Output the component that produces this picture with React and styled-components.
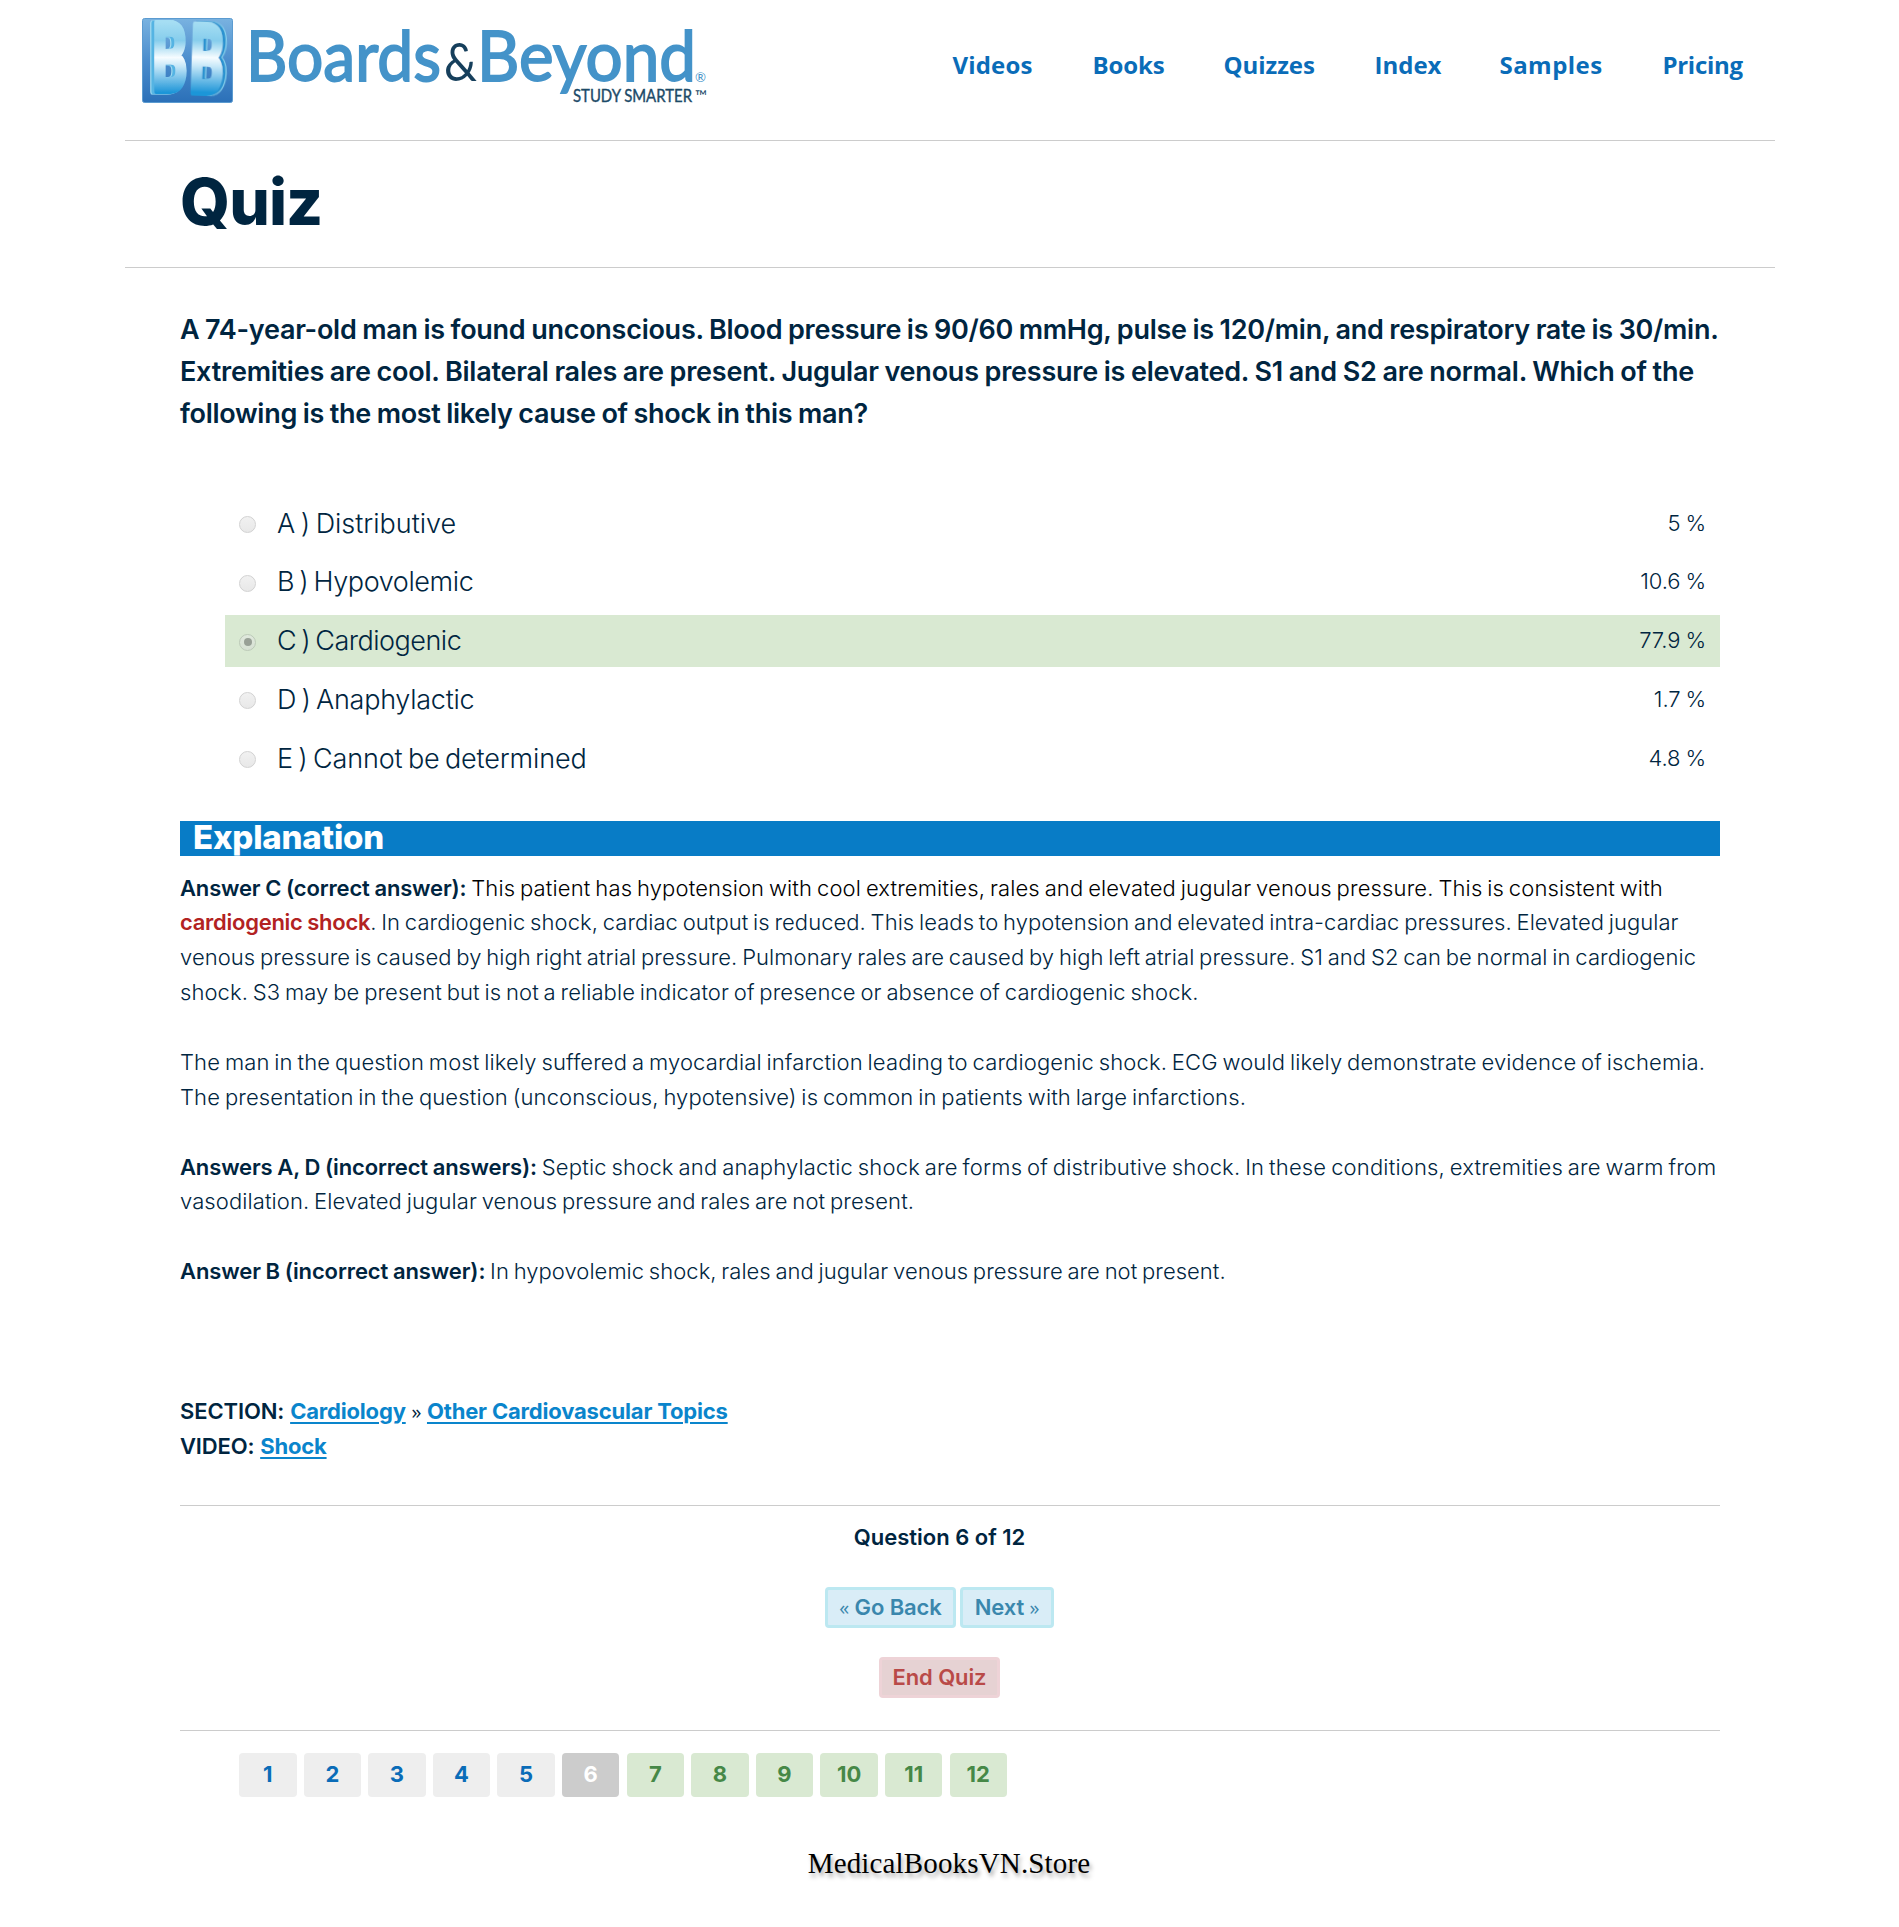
import React from 'react';
import styled, { createGlobalStyle } from 'styled-components';

const Global = createGlobalStyle`
  * { box-sizing: border-box; }
  body { margin: 0; background: #fff; color: #002540; font-family: Inter, "Liberation Sans", sans-serif; }
`;

const Page = styled.div`
  width: 1650px;
  height: 1927px;
  margin-left: 125px;
  overflow: hidden;
`;
const Header = styled.header`
  display: flex;
  justify-content: space-between;
  height: 141px;
  padding: 12px 32px 0 15px;
  border-bottom: 1px solid #ccc;
`;
const Logo = styled.svg`
  display: block;
  width: 572px;
  height: 98px;
`;
const Nav = styled.nav`
  display: flex;
  gap: 60px;
  padding-top: 33px;
`;
const NavLink = styled.a`
  width: ${(p) => p.$w}px;
  white-space: nowrap;
  font: 700 24px/40px "Open Sans", sans-serif;
  letter-spacing: ${(p) => p.$ls}px;
  color: #0a6cb8;
`;
const TitleBar = styled.div`
  height: 127px;
  padding: 20px 55px 0;
  border-bottom: 1px solid #ccc;
`;
const Title = styled.h1`
  margin: 0;
  font-size: 64px;
  font-weight: 800;
  line-height: 82px;
  letter-spacing: -0.9px;
`;
const Content = styled.main`
  padding: 41px 55px 0;
`;
const Question = styled.div`
  font-size: 27px;
  font-weight: 600;
  line-height: 42px;
  word-spacing: -0.8px;
`;
const Line = styled.div`
  white-space: nowrap;
  letter-spacing: ${(p) => p.$ls}px;
`;
const Options = styled.div`
  display: flex;
  flex-direction: column;
  gap: 6.8px;
  margin: 62px 0 36.4px 45px;
`;
const Option = styled.label`
  display: flex;
  align-items: center;
  height: 52px;
  padding: 0 14px;
  background: ${(p) => (p.$correct ? '#d9e9d2' : 'transparent')};
`;
const Radio = styled.span`
  display: grid;
  place-items: center;
  width: 17px;
  height: 17px;
  margin: 3px 21px 0 0;
  border: 1px solid ${(p) => (p.$on ? '#bccab8' : '#d2d2d2')};
  border-radius: 50%;
  background: ${(p) => (p.$on ? 'linear-gradient(#e0e9dd, #d6e0d3)' : 'linear-gradient(#f1f1f1, #e8e8e8)')};
  &::after {
    content: '';
    width: 8px;
    height: 8px;
    border-radius: 50%;
    background: ${(p) => (p.$on ? '#98a096' : 'transparent')};
  }
`;
const OptionText = styled.span`
  flex: 1;
  font-size: 27px;
  font-weight: 300;
  line-height: 50px;
  padding-top: 1px;
  letter-spacing: ${(p) => p.$ls}px;
  word-spacing: -2px;
`;
const Percent = styled.span`
  font-size: 22px;
  font-weight: 300;
  line-height: 50px;
  letter-spacing: -0.1px;
  word-spacing: -1px;
  margin-bottom: 1px;
`;
const SectionTitle = styled.h2`
  height: 35px;
  margin: 0 0 15px;
  padding-left: 13px;
  background: #087cc6;
  color: #fff;
  font-size: 33px;
  font-weight: 800;
  line-height: 32px;
  letter-spacing: -0.2px;
`;
const Body = styled.div`
  font-size: 22px;
  font-weight: 300;
  line-height: 34.87px;
`;
const Paragraph = styled.div`
  margin-bottom: ${(p) => p.$after || 34.87}px;
  word-spacing: -1.5px;
`;
const Strong = styled.b`
  font-weight: 600;
  letter-spacing: ${(p) => p.$ls ?? -0.17}px;
  word-spacing: -0.6px;
`;
const Term = styled(Strong)`
  color: #b22222;
`;
const Black = styled.span`
  color: #000;
`;
const Link = styled.a`
  color: #0a85cc;
  font-weight: 700;
  text-decoration: underline;
  text-decoration-thickness: 2px;
  text-underline-offset: 3px;
  letter-spacing: -0.18px;
`;
const Progress = styled.section`
  display: flex;
  flex-direction: column;
  align-items: center;
  height: 226px;
  margin-top: 41.4px;
  padding: 14px 21px 0 0;
  border: solid #ccc;
  border-width: 1px 0;
`;
const Counter = styled.div`
  font-size: 22px;
  font-weight: 600;
  line-height: 35px;
`;
const ButtonRow = styled.div`
  display: flex;
  gap: 4px;
  margin: 32px 0 29px;
`;
const Button = styled.button`
  width: ${(p) => p.$w}px;
  height: 41px;
  padding: 0;
  border: 3px solid ${(p) => (p.$danger ? '#eed3d7' : '#bce8f1')};
  border-radius: 4px;
  background: ${(p) => (p.$danger ? '#e6d2d3' : '#d9edf7')};
  color: ${(p) => (p.$danger ? '#b94a48' : '#3a87ad')};
  font: 600 22px/34px Inter, sans-serif;
  letter-spacing: -0.1px;
  white-space: nowrap;
`;
const Guillemet = styled.span`
  font-family: "Open Sans", sans-serif;
  font-size: 20px;
  font-weight: 400;
  line-height: 1;
`;
const Pages = styled.div`
  display: flex;
  gap: 7.1px;
  margin: 22px 0 0 59px;
`;
const tones = {
  done: ['#eee', '#0a6cb8'],
  current: ['#ccc', '#fff'],
  open: ['#d9e9d2', '#468847'],
};
const PageLink = styled.a`
  width: 57.5px;
  height: 44px;
  border-radius: 4px;
  background: ${(p) => tones[p.$tone][0]};
  color: ${(p) => tones[p.$tone][1]};
  font-size: 22px;
  font-weight: 700;
  line-height: 42px;
  text-align: center;
`;
const Footer = styled.footer`
  margin-top: 48px;
  padding-right: 2px;
  text-align: center;
  color: #000;
  font: 29px/36px "Palatino Linotype", "Book Antiqua", "Liberation Serif", serif;
  letter-spacing: 0.15px;
  text-shadow: 2px 4px 4px rgba(0, 0, 0, 0.35);
`;

const nav = [['Videos', 80, 0.15], ['Books', 71, -0.1], ['Quizzes', 91, -0.05], ['Index', 65, 0], ['Samples', 103, 0.45], ['Pricing', 80.5, -0.3]];
const options = [
  ['A ) Distributive', '5 %', -0.02],
  ['B ) Hypovolemic', '10.6 %', -0.4],
  ['C ) Cardiogenic', '77.9 %', -0.5],
  ['D ) Anaphylactic', '1.7 %', -0.25],
  ['E ) Cannot be determined', '4.8 %', -0.15],
];

function BrandLogo() {
  return (
    <Logo viewBox="140 12 572 98">
      <defs>
        <linearGradient id="tile" x1="0" y1="0" x2="0" y2="1">
          <stop offset="0" stopColor="#79b2e0" />
          <stop offset="0.5" stopColor="#4b8dcd" />
          <stop offset="1" stopColor="#2b70b8" />
        </linearGradient>
        <linearGradient id="ice" gradientUnits="userSpaceOnUse" x1="0" y1="22" x2="0" y2="96">
          <stop offset="0" stopColor="#a6def3" />
          <stop offset="0.25" stopColor="#86cdec" />
          <stop offset="0.48" stopColor="#f6fcff" />
          <stop offset="0.6" stopColor="#c5e7f8" />
          <stop offset="0.95" stopColor="#1f96d8" />
        </linearGradient>
        <filter id="edgeLeft" x="-20%" y="-20%" width="140%" height="140%">
          <feDropShadow dx="-3" dy="0.5" stdDeviation="0.3" floodColor="#55b4e3" />
          <feDropShadow dx="-1" dy="0" stdDeviation="0.4" floodColor="#a8e4f5" />
        </filter>
        <filter id="edgeRight" x="-20%" y="-20%" width="140%" height="140%">
          <feDropShadow dx="3" dy="-0.5" stdDeviation="0.3" floodColor="#2b93d0" />
          <feDropShadow dx="1" dy="0" stdDeviation="0.4" floodColor="#8fdcf3" />
        </filter>
      </defs>
      <rect x="142.5" y="18.5" width="90" height="84" rx="2" fill="url(#tile)" stroke="#5b9bd0" />
      <g fontFamily="Lato, sans-serif" fontWeight="900" fontSize="93" strokeLinejoin="round" fill="url(#ice)" stroke="url(#ice)" strokeWidth="6">
        <g filter="url(#edgeLeft)"><text x="152" y="91" textLength="35" lengthAdjust="spacingAndGlyphs">B</text></g>
        <g filter="url(#edgeRight)" transform="rotate(2 206 60)"><text x="189.5" y="92.5" textLength="34" lengthAdjust="spacingAndGlyphs">B</text></g>
      </g>
      <g fontFamily="Lato, sans-serif" fill="#4493c9">
        <text x="246" y="80.5" fontSize="69" stroke="#4493c9" strokeWidth="1.8" textLength="195" lengthAdjust="spacingAndGlyphs">Boards</text>
        <text x="444" y="80.5" fontSize="52" fill="#163f5c" textLength="33" lengthAdjust="spacingAndGlyphs">&amp;</text>
        <text x="477" y="80.5" fontSize="69" stroke="#4493c9" strokeWidth="1.8" textLength="219" lengthAdjust="spacingAndGlyphs">Beyond</text>
        <text x="695" y="82" fontSize="14" textLength="11" lengthAdjust="spacingAndGlyphs">®</text>
        <text x="573" y="102" fontSize="17.5" fill="#1c4a68" stroke="#1c4a68" strokeWidth="0.4" textLength="119" lengthAdjust="spacingAndGlyphs">STUDY SMARTER</text>
        <text x="695" y="102" fontSize="16" fill="#1c4a68" textLength="12" lengthAdjust="spacingAndGlyphs">™</text>
      </g>
    </Logo>
  );
}

export default function App() {
  return (
    <Page>
      <Global />
      <Header>
        <BrandLogo />
        <Nav>
          {nav.map(([t, w, ls]) => <NavLink key={t} $w={w} $ls={ls}>{t}</NavLink>)}
        </Nav>
      </Header>
      <TitleBar><Title>Quiz</Title></TitleBar>
      <Content>
        <Question>
          <Line $ls={-0.265}>A 74-year-old man is found unconscious. Blood pressure is 90/60 mmHg, pulse is 120/min, and respiratory rate is 30/min.</Line>
          <Line $ls={-0.225}>Extremities are cool. Bilateral rales are present. Jugular venous pressure is elevated. S1 and S2 are normal. Which of the</Line>
          <Line $ls={-0.29}>following is the most likely cause of shock in this man?</Line>
        </Question>
        <Options>
          {options.map(([t, pct, ls], i) => (
            <Option key={t} $correct={i === 2}>
              <Radio $on={i === 2} />
              <OptionText $ls={ls}>{t}</OptionText>
              <Percent>{pct}</Percent>
            </Option>
          ))}
        </Options>
        <SectionTitle>Explanation</SectionTitle>
        <Body>
          <Paragraph>
            <Line $ls={0.14}><Strong>Answer C (correct answer):</Strong> <Black>This patient has hypotension with cool extremities, rales and elevated jugular venous pressure. This is consistent with</Black></Line>
            <Line $ls={0.055}><Term $ls={-0.27}>cardiogenic shock</Term>. In cardiogenic shock, cardiac output is reduced. This leads to hypotension and elevated intra-cardiac pressures. Elevated jugular</Line>
            <Line $ls={0.07}>venous pressure is caused by high right atrial pressure. Pulmonary rales are caused by high left atrial pressure. S1 and S2 can be normal in cardiogenic</Line>
            <Line $ls={0.09}>shock. S3 may be present but is not a reliable indicator of presence or absence of cardiogenic shock.</Line>
          </Paragraph>
          <Paragraph>
            <Line $ls={0.13}>The man in the question most likely suffered a myocardial infarction leading to cardiogenic shock. ECG would likely demonstrate evidence of ischemia.</Line>
            <Line $ls={0.127}>The presentation in the question (unconscious, hypotensive) is common in patients with large infarctions.</Line>
          </Paragraph>
          <Paragraph>
            <Line $ls={0.17}><Strong $ls={-0.14}>Answers A, D (incorrect answers):</Strong> Septic shock and anaphylactic shock are forms of distributive shock. In these conditions, extremities are warm from</Line>
            <Line $ls={0.1}>vasodilation. Elevated jugular venous pressure and rales are not present.</Line>
          </Paragraph>
          <Paragraph $after={104.6}>
            <Line $ls={0.04}><Strong $ls={-0.11}>Answer B (incorrect answer):</Strong> In hypovolemic shock, rales and jugular venous pressure are not present.</Line>
          </Paragraph>
          <Line $ls={-0.35}><Strong $ls={-0.1}>SECTION:</Strong> <Link>Cardiology</Link> <Guillemet>»</Guillemet> <Link>Other Cardiovascular Topics</Link></Line>
          <Line $ls={-0.35}><Strong $ls={-0.15}>VIDEO:</Strong> <Link>Shock</Link></Line>
        </Body>
        <Progress>
          <Counter>Question 6 of 12</Counter>
          <ButtonRow>
            <Button $w={131}><Guillemet>«</Guillemet> Go Back</Button>
            <Button $w={94}>Next <Guillemet>»</Guillemet></Button>
          </ButtonRow>
          <Button $danger $w={121}>End Quiz</Button>
        </Progress>
        <Pages>
          {Array.from({ length: 12 }, (_, i) => (
            <PageLink key={i} $tone={i < 5 ? 'done' : i === 5 ? 'current' : 'open'}>{i + 1}</PageLink>
          ))}
        </Pages>
        <Footer>MedicalBooksVN.Store</Footer>
      </Content>
    </Page>
  );
}
